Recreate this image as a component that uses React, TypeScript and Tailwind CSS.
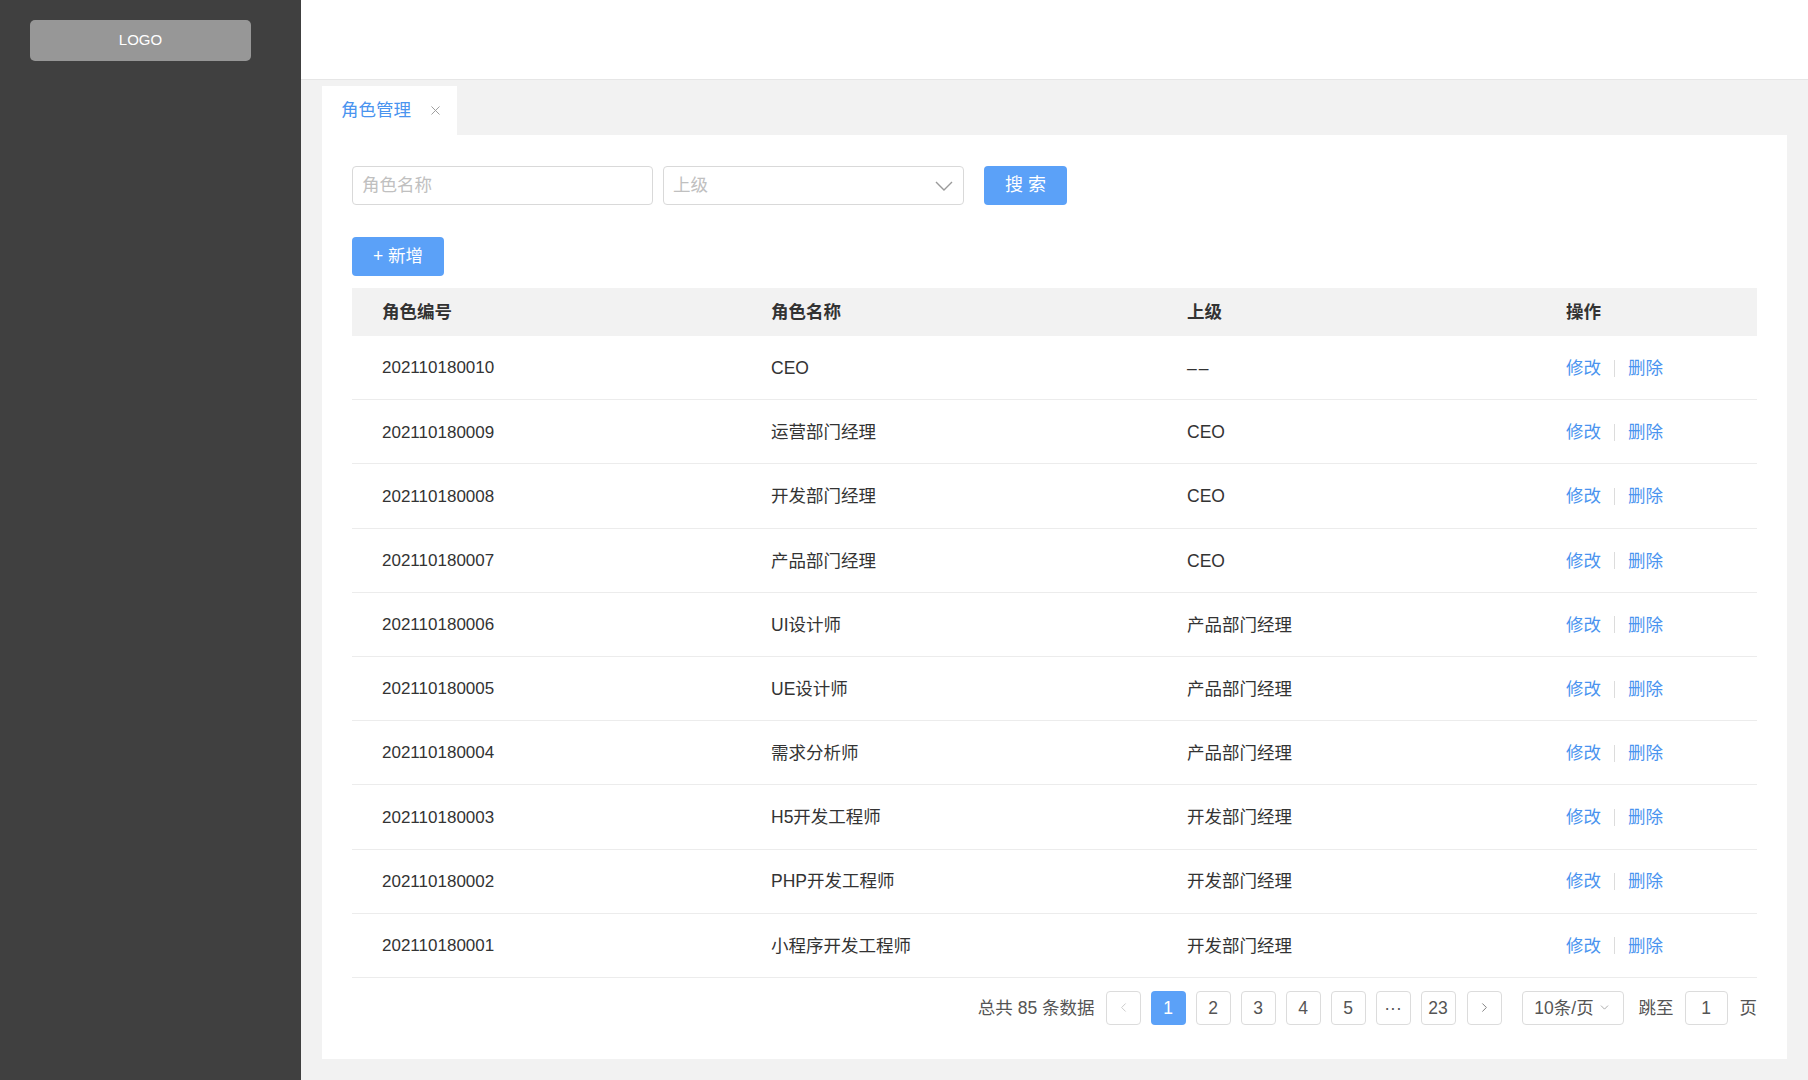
import { ChevronDown, ChevronLeft, ChevronRight, X } from 'lucide-react'

const FONT = { fontFamily: '"Helvetica Neue", "Liberation Sans", "Noto Sans CJK SC", sans-serif' }

const ROWS = [
  { id: '202110180010', name: 'CEO', parent: '––' },
  { id: '202110180009', name: '运营部门经理', parent: 'CEO' },
  { id: '202110180008', name: '开发部门经理', parent: 'CEO' },
  { id: '202110180007', name: '产品部门经理', parent: 'CEO' },
  { id: '202110180006', name: 'UI设计师', parent: '产品部门经理' },
  { id: '202110180005', name: 'UE设计师', parent: '产品部门经理' },
  { id: '202110180004', name: '需求分析师', parent: '产品部门经理' },
  { id: '202110180003', name: 'H5开发工程师', parent: '开发部门经理' },
  { id: '202110180002', name: 'PHP开发工程师', parent: '开发部门经理' },
  { id: '202110180001', name: '小程序开发工程师', parent: '开发部门经理' },
]

const PAGES = ['1', '2', '3', '4', '5', '···', '23']

export default function App() {
  return (
    <div className="flex w-[1808px] h-[1080px] overflow-hidden bg-[#f2f2f2] text-[#333]" style={FONT}>
      {/* 侧边栏 */}
      <aside className="w-[301px] shrink-0 bg-[#404040] pt-[20px] pl-[30px]">
        <div className="w-[221px] h-[41px] rounded-[5px] bg-[#979797] flex items-center justify-center text-[15px] text-white">
          LOGO
        </div>
      </aside>

      <div className="flex-1 flex flex-col min-w-0">
        {/* 顶栏 */}
        <header className="h-[80px] shrink-0 bg-white border-b border-[#e6e6e6]" />

        <main className="flex-1 flex flex-col px-[21px] pt-[6px] pb-[21px] min-h-0">
          {/* 标签页 */}
          <div className="flex">
            <div className="h-[49px] w-[135px] bg-white flex items-center pl-[19px] gap-[17px]">
              <span className="text-[17.5px] text-[#4a94ef]">角色管理</span>
              <X className="w-[15px] h-[15px] text-[#999]" strokeWidth={1.5} />
            </div>
          </div>

          {/* 内容卡片 */}
          <div className="flex-1 bg-white px-[30px] pt-[31px] flex flex-col">
            {/* 搜索 */}
            <div className="flex items-center">
              <div className="w-[301px] h-[39px] border border-[#d9d9d9] rounded-[4px] flex items-center px-[9px] text-[17.5px] text-[#c0c0c0]">
                角色名称
              </div>
              <div className="ml-[10px] w-[301px] h-[39px] border border-[#d9d9d9] rounded-[4px] flex items-center justify-between pl-[9px] pr-[10px] text-[17.5px] text-[#c0c0c0]">
                <span>上级</span>
                <svg width="18" height="10" viewBox="0 0 18 10" fill="none" stroke="#9a9a9a" strokeWidth="1.4">
                  <path d="M1 1 L9 9 L17 1" />
                </svg>
              </div>
              <button className="ml-[20px] w-[83px] h-[39px] rounded-[4px] bg-[#5ba1f8] text-white text-[18px]">
                搜 索
              </button>
            </div>

            <div className="mt-[32px]">
              <button className="w-[92px] h-[39px] rounded-[4px] bg-[#5ba1f8] text-white text-[17.5px]">
                + 新增
              </button>
            </div>

            {/* 表格 */}
            <div className="mt-[12px]">
              <div className="grid grid-cols-[389px_416px_379px_1fr] h-[48px] items-center bg-[#f2f2f2] text-[17.5px] font-bold text-[#333]">
                <div className="pl-[30px]">角色编号</div>
                <div className="pl-[30px]">角色名称</div>
                <div className="pl-[30px]">上级</div>
                <div className="pl-[30px]">操作</div>
              </div>
              {ROWS.map((r) => (
                <div
                  key={r.id}
                  className="grid grid-cols-[389px_416px_379px_1fr] h-[64.2px] items-center border-b border-[#ececec] text-[17.5px] text-[#333]"
                >
                  <div className="pl-[30px] pt-[1px] text-[17px]">{r.id}</div>
                  <div className="pl-[30px] pt-[1px]">{r.name}</div>
                  <div className="pl-[30px] pt-[1px] tracking-[2px]" style={{ fontFamily: '"Liberation Sans", sans-serif' }}>
                    {r.parent === '––' ? r.parent : <span style={FONT} className="tracking-normal">{r.parent}</span>}
                  </div>
                  <div className="pl-[30px] pt-[1px] flex items-center text-[#4a94ef]">
                    <span>修改</span>
                    <span className="mx-[13px] w-px h-[17px] bg-[#dcdcdc]" />
                    <span>删除</span>
                  </div>
                </div>
              ))}
            </div>

            {/* 分页 */}
            <div className="mt-[13px] flex items-center justify-end text-[17.5px] text-[#555]">
              <span className="mr-[11px]">总共 85 条数据</span>
              <div className="w-[35px] h-[34px] border border-[#dcdcdc] rounded-[4px] flex items-center justify-center text-[#c8c8c8]">
                <ChevronLeft className="w-[15px] h-[15px]" strokeWidth={1.5} />
              </div>
              {PAGES.map((p) => (
                <div
                  key={p}
                  className={
                    p === '1'
                      ? 'ml-[10px] w-[35px] h-[34px] rounded-[4px] bg-[#5ba1f8] text-white flex items-center justify-center'
                      : 'ml-[10px] w-[35px] h-[34px] border border-[#dcdcdc] rounded-[4px] flex items-center justify-center'
                  }
                >
                  {p}
                </div>
              ))}
              <div className="ml-[11px] w-[35px] h-[34px] border border-[#dcdcdc] rounded-[4px] flex items-center justify-center text-[#777]">
                <ChevronRight className="w-[15px] h-[15px]" strokeWidth={1.5} />
              </div>
              <div className="ml-[20px] w-[102px] h-[34px] border border-[#dcdcdc] rounded-[4px] flex items-center justify-center gap-[4px]">
                <span>10条/页</span>
                <ChevronDown className="w-[13px] h-[13px] text-[#999]" strokeWidth={1.5} />
              </div>
              <span className="ml-[15px]">跳至</span>
              <div className="ml-[11px] w-[43px] h-[34px] border border-[#dcdcdc] rounded-[4px] flex items-center justify-center">
                1
              </div>
              <span className="ml-[12px]">页</span>
            </div>
          </div>
        </main>
      </div>
    </div>
  )
}
